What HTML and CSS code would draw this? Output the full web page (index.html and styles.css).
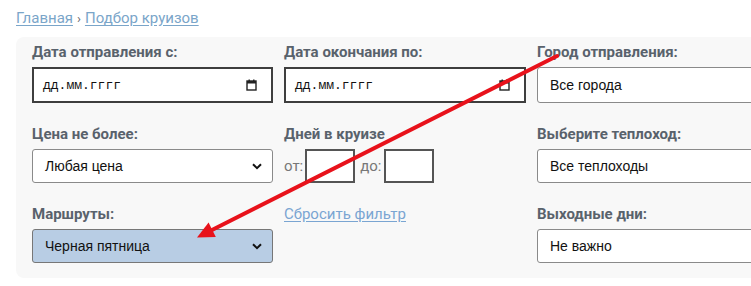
FILE: index.html
```html
<!DOCTYPE html>
<html lang="ru">
<head>
<meta charset="utf-8">
<title>Подбор круизов</title>
<link rel="stylesheet" href="styles.css">
</head>
<body>
<nav class="crumbs"><a href="#">Главная</a><span class="sep">›</span><a href="#">Подбор круизов</a></nav>
<form class="filter">
  <div class="field">
    <label class="lbl">Дата отправления с:</label>
    <div class="date"><span>дд.мм.гггг</span>
      <svg class="cal" width="11" height="12" viewBox="0 0 11 12"><rect x="1" y="2" width="9" height="9" fill="none" stroke="#222" stroke-width="1.4"/><rect x="1" y="2" width="9" height="2.5" fill="#222"/><rect x="2.5" y="0.5" width="1.4" height="2" fill="#222"/><rect x="7.1" y="0.5" width="1.4" height="2" fill="#222"/></svg>
    </div>
  </div>
  <div class="field">
    <label class="lbl">Дата окончания по:</label>
    <div class="date"><span>дд.мм.гггг</span>
      <svg class="cal" width="11" height="12" viewBox="0 0 11 12"><rect x="1" y="2" width="9" height="9" fill="none" stroke="#222" stroke-width="1.4"/><rect x="1" y="2" width="9" height="2.5" fill="#222"/><rect x="2.5" y="0.5" width="1.4" height="2" fill="#222"/><rect x="7.1" y="0.5" width="1.4" height="2" fill="#222"/></svg>
    </div>
  </div>
  <div class="field">
    <label class="lbl">Город отправления:</label>
    <div class="box tall">Все города</div>
  </div>

  <div class="field">
    <label class="lbl">Цена не более:</label>
    <div class="box sel">Любая цена<svg class="chev" width="10" height="7" viewBox="0 0 10 7"><path d="M1 1.2 L5 5.2 L9 1.2" fill="none" stroke="#111" stroke-width="2"/></svg></div>
  </div>
  <div class="field">
    <label class="lbl">Дней в круизе</label>
    <div class="days"><span>от:</span><div class="num"></div><span>до:</span><div class="num"></div></div>
  </div>
  <div class="field">
    <label class="lbl">Выберите теплоход:</label>
    <div class="box">Все теплоходы</div>
  </div>

  <div class="field">
    <label class="lbl">Маршруты:</label>
    <div class="box sel active">Черная пятница<svg class="chev" width="10" height="7" viewBox="0 0 10 7"><path d="M1 1.2 L5 5.2 L9 1.2" fill="none" stroke="#111" stroke-width="2"/></svg></div>
  </div>
  <div class="field">
    <a class="reset" href="#">Сбросить фильтр</a>
  </div>
  <div class="field">
    <label class="lbl">Выходные дни:</label>
    <div class="box">Не важно</div>
  </div>
</form>
<svg class="arrow" width="751" height="286" viewBox="0 0 751 286">
  <line x1="557" y1="56" x2="211" y2="230.5" stroke="#e8121b" stroke-width="4" stroke-linecap="round"/>
  <polygon points="197,237.5 208.6,222.6 215.8,237" fill="#e8121b"/>
</svg>
</body>
</html>
```
FILE: styles.css
```css
html, body {
  margin: 0;
  padding: 0;
  background: #fff;
  overflow: hidden;
}
body {
  width: 751px;
  height: 286px;
  position: relative;
  font-family: "Roboto", "Liberation Sans", sans-serif;
}
.crumbs {
  padding: 7px 16px 0;
  height: 30px;
  box-sizing: border-box;
  font-size: 15px;
  line-height: 22px;
  color: #7aa5c9;
}
.crumbs a {
  color: #7aa5c9;
  text-decoration: underline;
  text-underline-offset: 2px;
}
.crumbs .sep {
  margin: 0 4px;
  font-size: 13px;
  color: #666;
}
.filter {
  margin: 7px 0 0 16px;
  width: 800px;
  box-sizing: border-box;
  padding: 5px 0 15px 16px;
  background: #f8f8f8;
  border-radius: 8px;
  display: grid;
  grid-template-columns: 241px 242px 241px;
  column-gap: 11px;
  row-gap: 21px;
}
.field {
  display: flex;
  flex-direction: column;
}
.lbl {
  display: block;
  font-size: 15px;
  font-weight: 700;
  line-height: 20px;
  color: #59626c;
  margin-bottom: 5px;
}
.date {
  height: 36px;
  box-sizing: border-box;
  border: 2px solid #3e3e3e;
  background: #fff;
  display: flex;
  align-items: center;
  justify-content: space-between;
  padding: 0 14px 0 9px;
  font-family: "Liberation Mono", monospace;
  font-size: 13px;
  color: #111;
}
.box {
  height: 34px;
  box-sizing: border-box;
  border: 1px solid #8a8a8a;
  border-radius: 3px;
  background: #fff;
  display: flex;
  align-items: center;
  justify-content: space-between;
  padding: 0 10px 0 12px;
  font-family: "Liberation Sans", Arial, sans-serif;
  font-size: 14px;
  color: #111;
}
.box.tall {
  height: 36px;
}
.box.active {
  background: #b8cde4;
  border-color: #777;
}
.days {
  display: flex;
  align-items: center;
  height: 34px;
  font-size: 15px;
  color: #777;
}
.days span {
  margin-right: 2px;
}
.days .num {
  width: 50px;
  height: 34px;
  box-sizing: border-box;
  border: 2px solid #555;
  background: #fff;
  margin-right: 5px;
}
.reset {
  font-size: 15px;
  line-height: 20px;
  color: #7aa5d2;
  text-decoration: underline;
  text-underline-offset: 2px;
}
.arrow {
  position: absolute;
  left: 0;
  top: 0;
  pointer-events: none;
}
```
